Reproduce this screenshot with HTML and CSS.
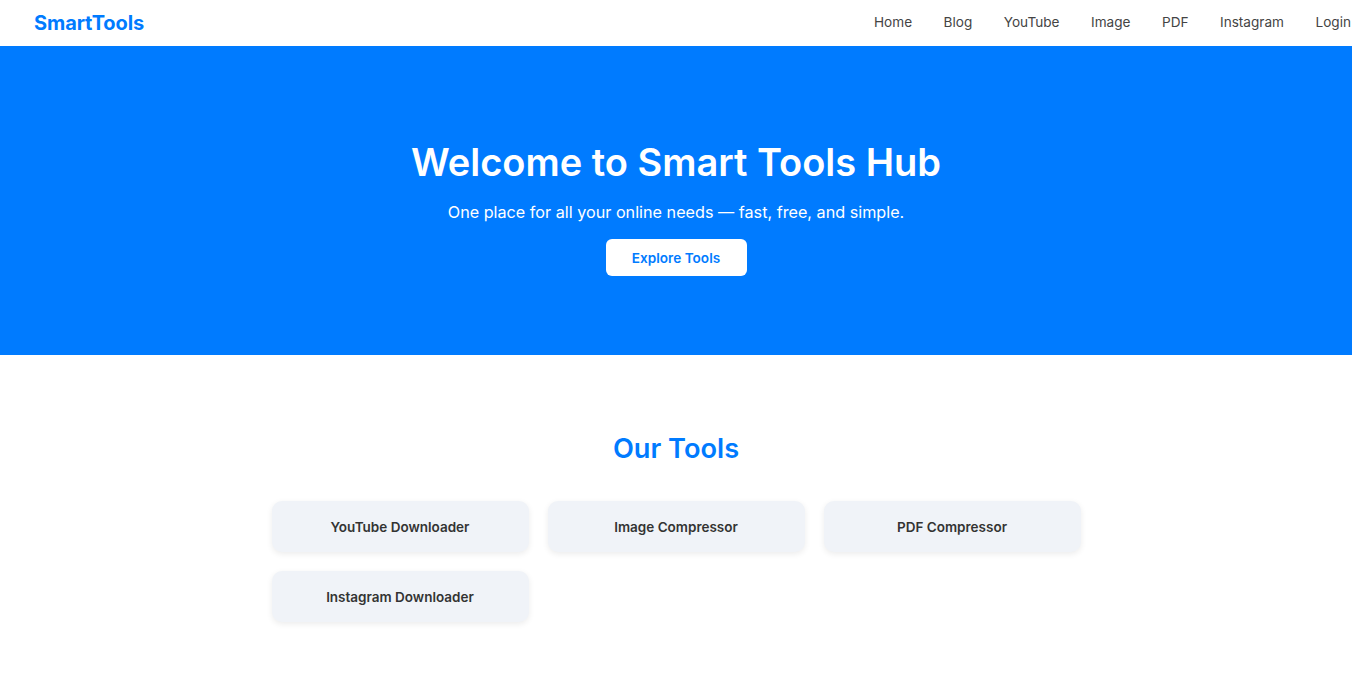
FILE: index.html
```html
<!DOCTYPE html>
<html lang="en">
<head>
<meta charset="utf-8">
<title>SmartTools</title>
<link rel="stylesheet" href="styles.css">
</head>
<body>
<header class="header">
  <a class="logo" href="#">SmartTools</a>
  <nav class="nav">
    <a href="#">Home</a>
    <a href="#">Blog</a>
    <a href="#">YouTube</a>
    <a href="#">Image</a>
    <a href="#">PDF</a>
    <a href="#">Instagram</a>
    <a href="#">Login</a>
  </nav>
</header>
<section class="hero">
  <h1 class="hero-title">Welcome to Smart Tools Hub</h1>
  <p class="hero-sub">One place for all your online needs — fast, free, and simple.</p>
  <a class="hero-btn" href="#">Explore Tools</a>
</section>
<section class="tools">
  <h2 class="tools-title">Our Tools</h2>
  <div class="tool-grid">
    <a class="tool-card" href="#">YouTube Downloader</a>
    <a class="tool-card" href="#">Image Compressor</a>
    <a class="tool-card" href="#">PDF Compressor</a>
    <a class="tool-card" href="#">Instagram Downloader</a>
  </div>
</section>
</body>
</html>
```
FILE: styles.css
```css
* { box-sizing: border-box; }
html, body { margin: 0; padding: 0; }
body {
  font-family: Inter, "Noto Sans", "Liberation Sans", sans-serif;
  background: #fff;
  color: #333;
  overflow-x: hidden;
}
a { text-decoration: none; }
.header {
  height: 46px;
  display: flex;
  align-items: center;
  justify-content: space-between;
  padding: 0 0 0 34px;
  background: #fff;
}
.logo {
  color: #007bff;
  font-size: 20px;
  font-weight: 700;
  letter-spacing: -0.1px;
}
.nav {
  display: flex;
  gap: 31.5px;
  margin-right: 1px;
  padding-bottom: 3px;
}
.nav a {
  color: #444;
  font-size: 13.6px;
}
.hero {
  background: #007bff;
  color: #fff;
  height: 309px;
  display: flex;
  flex-direction: column;
  align-items: center;
  padding-top: 92px;
}
.hero-title {
  margin: 0;
  font-size: 38px;
  font-weight: 600;
  line-height: 48px;
}
.hero-sub {
  margin: 16px 0 0;
  font-size: 16.2px;
  line-height: 20px;
}
.hero-btn {
  margin-top: 17px;
  background: #fff;
  color: #007bff;
  font-size: 13.6px;
  font-weight: 600;
  width: 141px;
  height: 37px;
  display: flex;
  align-items: center;
  justify-content: center;
  border-radius: 6px;
}
.tools {
  display: flex;
  flex-direction: column;
  align-items: center;
  padding-top: 74px;
  padding-bottom: 60px;
}
.tools-title {
  margin: 0;
  color: #007bff;
  font-size: 27.2px;
  font-weight: 600;
  line-height: 40px;
}
.tool-grid {
  margin-top: 32px;
  display: grid;
  grid-template-columns: repeat(3, 257px);
  gap: 19px;
}
.tool-card {
  height: 51px;
  background: #f0f3f8;
  border-radius: 10px;
  box-shadow: 0 2px 6px rgba(0, 0, 0, 0.08);
  display: flex;
  align-items: center;
  justify-content: center;
  color: #333;
  font-size: 13.5px;
  font-weight: 600;
}
```
